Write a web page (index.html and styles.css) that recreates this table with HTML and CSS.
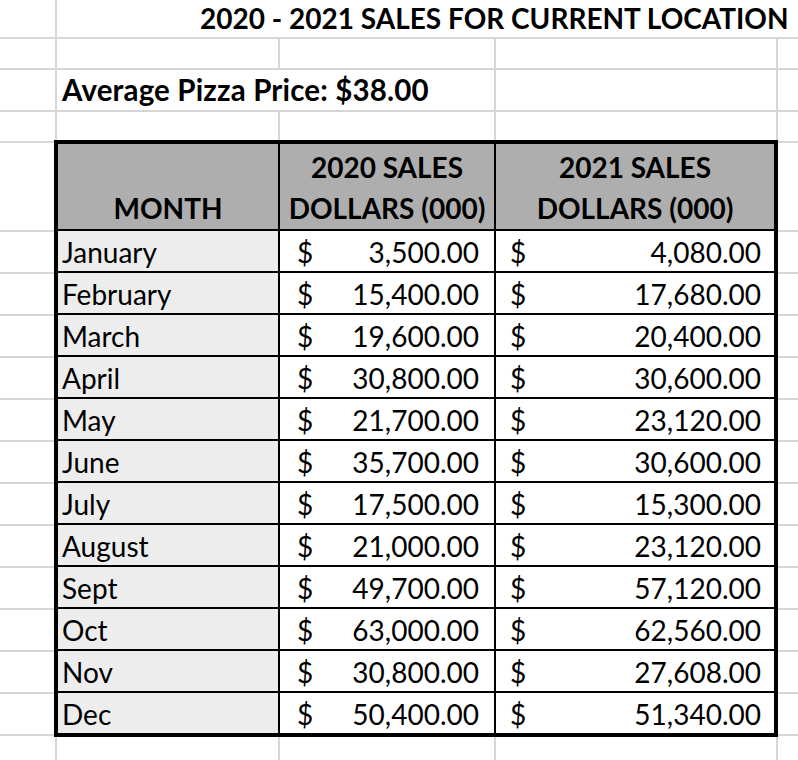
FILE: index.html
```html
<!DOCTYPE html>
<html lang="en">
<head>
<meta charset="utf-8">
<title>2020 - 2021 Sales for Current Location</title>
<link rel="stylesheet" href="styles.css">
</head>
<body>
<div class="sheet">
  <div class="row r1">
    <div class="cell"></div>
    <div class="cell span4 title">2020 - 2021 SALES FOR CURRENT LOCATION</div>
  </div>
  <div class="row r2">
    <div class="cell"></div><div class="cell"></div><div class="cell"></div><div class="cell"></div><div class="cell last"></div>
  </div>
  <div class="row r3">
    <div class="cell"></div>
    <div class="cell span2 avg">Average Pizza Price: $38.00</div>
    <div class="cell"></div><div class="cell last"></div>
  </div>
  <div class="row r4 nobottom">
    <div class="cell"></div><div class="cell"></div><div class="cell"></div><div class="cell"></div><div class="cell last"></div>
  </div>

  <div class="zone">
    <div class="tbl">
      <div class="trow head">
        <div class="th">MONTH</div>
        <div class="th">2020 SALES<br>DOLLARS (000)</div>
        <div class="th">2021 SALES<br>DOLLARS (000)</div>
      </div>
      <div class="trow"><div class="month">January</div><div class="val v1"><span>$</span><span>3,500.00</span></div><div class="val v2"><span>$</span><span>4,080.00</span></div></div>
      <div class="trow"><div class="month">February</div><div class="val v1"><span>$</span><span>15,400.00</span></div><div class="val v2"><span>$</span><span>17,680.00</span></div></div>
      <div class="trow"><div class="month">March</div><div class="val v1"><span>$</span><span>19,600.00</span></div><div class="val v2"><span>$</span><span>20,400.00</span></div></div>
      <div class="trow"><div class="month">April</div><div class="val v1"><span>$</span><span>30,800.00</span></div><div class="val v2"><span>$</span><span>30,600.00</span></div></div>
      <div class="trow"><div class="month">May</div><div class="val v1"><span>$</span><span>21,700.00</span></div><div class="val v2"><span>$</span><span>23,120.00</span></div></div>
      <div class="trow"><div class="month">June</div><div class="val v1"><span>$</span><span>35,700.00</span></div><div class="val v2"><span>$</span><span>30,600.00</span></div></div>
      <div class="trow"><div class="month">July</div><div class="val v1"><span>$</span><span>17,500.00</span></div><div class="val v2"><span>$</span><span>15,300.00</span></div></div>
      <div class="trow"><div class="month">August</div><div class="val v1"><span>$</span><span>21,000.00</span></div><div class="val v2"><span>$</span><span>23,120.00</span></div></div>
      <div class="trow"><div class="month">Sept</div><div class="val v1"><span>$</span><span>49,700.00</span></div><div class="val v2"><span>$</span><span>57,120.00</span></div></div>
      <div class="trow"><div class="month">Oct</div><div class="val v1"><span>$</span><span>63,000.00</span></div><div class="val v2"><span>$</span><span>62,560.00</span></div></div>
      <div class="trow"><div class="month">Nov</div><div class="val v1"><span>$</span><span>30,800.00</span></div><div class="val v2"><span>$</span><span>27,608.00</span></div></div>
      <div class="trow lastrow"><div class="month">Dec</div><div class="val v1"><span>$</span><span>50,400.00</span></div><div class="val v2"><span>$</span><span>51,340.00</span></div></div>
    </div>
  </div>

  <div class="row r18 nobottom">
    <div class="cell"></div><div class="cell"></div><div class="cell"></div><div class="cell"></div><div class="cell last"></div>
  </div>
</div>
</body>
</html>
```

FILE: styles.css
```css
* { box-sizing: border-box; }

html, body {
  margin: 0;
  padding: 0;
  background: #ffffff;
}

body {
  width: 798px;
  height: 760px;
  overflow: hidden;
  font-family: "Lato", "Open Sans", sans-serif;
  font-size: 28px;
  line-height: 34px;
  color: #000000;
}

.sheet {
  display: flex;
  flex-direction: column;
}

/* plain spreadsheet rows with light grid lines */
.row {
  display: grid;
  grid-template-columns: 57px 223px 216px 282px 1fr;
  border-bottom: 2px solid #d6d6d6;
}
.row.nobottom { border-bottom: none; }

.r1 { height: 39px; }
.r2 { height: 31px; }
.r3 { height: 42px; }
.r4 { height: 28px; }
.r18 { height: 23px; }

.cell {
  border-right: 2px solid #d6d6d6;
  white-space: nowrap;
  display: flex;
  align-items: flex-end;
}
.cell.last { border-right: none; }

.span4 { grid-column: span 4; border-right: none; }
.span2 { grid-column: span 2; }

.title {
  font-weight: 700;
  padding-left: 143px;
  padding-bottom: 2px;
  overflow: visible;
}

.avg {
  font-weight: 700;
  font-size: 29.5px;
  letter-spacing: 0.15px;
  padding-left: 5px;
  padding-bottom: 3px;
}

/* zone holding the bordered table; the background draws the grid lines
   visible to the left and right of the table */
.zone {
  height: 597px;
  background:
    linear-gradient(#d6d6d6, #d6d6d6) 0 1px / 100% 2px no-repeat,
    repeating-linear-gradient(to bottom, #d6d6d6 0 2px, #ffffff 2px 42px) 0 90px / 100% 100% no-repeat,
    #ffffff;
}

.tbl {
  margin-left: 54px;
  width: 724px;
  height: 597px;
  border: 4px solid #000000;
  display: flex;
  flex-direction: column;
}

.trow {
  display: grid;
  grid-template-columns: 222px 216px 1fr;
  height: 42px;
  border-bottom: 2px solid #000000;
}
.trow.lastrow { height: 40px; border-bottom: none; }
.trow.head { height: 87px; }

.trow > div {
  border-right: 2px solid #000000;
  display: flex;
  align-items: flex-end;
  white-space: nowrap;
  padding-bottom: 2px;
}
.trow > div:last-child { border-right: none; }

.th {
  background: #aeaeae;
  font-weight: 700;
  justify-content: center;
  text-align: center;
  line-height: 41px;
  padding-bottom: 0 !important;
}

.month {
  background: #ededed;
  padding-left: 4px;
}

.val {
  background: #ffffff;
  justify-content: space-between;
}
.val.v1 { padding-left: 17px; padding-right: 15px; }
.val.v2 { padding-left: 14px; padding-right: 13px; }
```
